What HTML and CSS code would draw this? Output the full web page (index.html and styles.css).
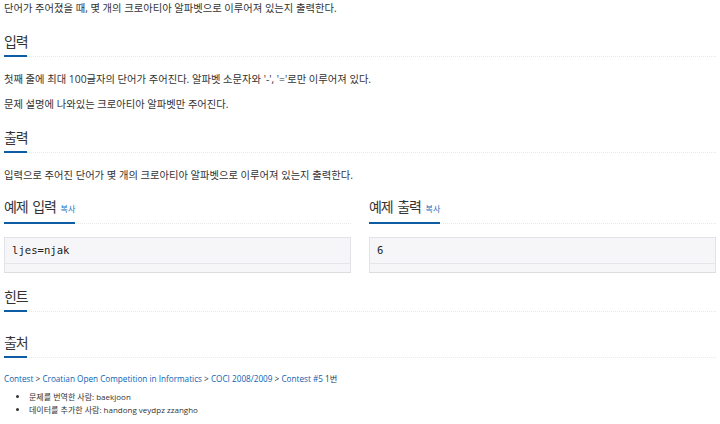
FILE: index.html
```html
<!DOCTYPE html>
<html>
<head>
<meta charset="utf-8">
<link rel="stylesheet" href="styles.css">
</head>
<body>
<div class="page">
  <p class="para lead">단어가 주어졌을 때, 몇 개의 크로아티아 알파벳으로 이루어져 있는지 출력한다.</p>

  <section class="sec">
    <div class="headline"><h2>입력</h2></div>
    <p class="para">첫째 줄에 최대 100글자의 단어가 주어진다. 알파벳 소문자와 '-', '='로만 이루어져 있다.</p>
    <p class="para">문제 설명에 나와있는 크로아티아 알파벳만 주어진다.</p>
  </section>

  <section class="sec">
    <div class="headline"><h2>출력</h2></div>
    <p class="para">입력으로 주어진 단어가 몇 개의 크로아티아 알파벳으로 이루어져 있는지 출력한다.</p>
  </section>

  <div class="samples">
    <div class="sample">
      <div class="headline"><h2>예제 입력 <a class="copy">복사</a></h2></div>
      <div class="box"><pre class="code">ljes=njak</pre></div>
    </div>
    <div class="sample">
      <div class="headline"><h2>예제 출력 <a class="copy">복사</a></h2></div>
      <div class="box"><pre class="code">6</pre></div>
    </div>
  </div>

  <section class="sec">
    <div class="headline empty"><h2>힌트</h2></div>
  </section>

  <section class="sec">
    <div class="headline"><h2>출처</h2></div>
    <p class="src"><a>Contest</a> &gt; <a>Croatian Open Competition in Informatics</a> &gt; <a>COCI 2008/2009</a> &gt; <a>Contest #5</a> 1번</p>
    <ul class="credits">
      <li>문제를 번역한 사람: baekjoon</li>
      <li>데이터를 추가한 사람: handong veydpz zzangho</li>
    </ul>
  </section>
</div>
</body>
</html>
```

FILE: styles.css
```css
html, body {
  margin: 0;
  padding: 0;
  background: #fff;
}
body {
  font-family: "Open Sans", "Noto Sans CJK KR", sans-serif;
  font-size: 10.3px;
  color: #333;
}
.page {
  padding: 0 4px;
  width: 712px;
}
.para {
  margin: 0;
  padding-bottom: 2px;
  line-height: 15px;
}
.para.lead {
  padding-top: 1px;
}
.para + .para {
  padding-top: 8px;
}
.headline {
  border-bottom: 1px dotted #e8e8e8;
  margin: 14px 0 15px;
}
.headline.empty {
  margin-bottom: 21px;
}
.headline h2 {
  display: inline-block;
  margin: 0 0 -1px;
  font-size: 14px;
  letter-spacing: -1.2px;
  word-spacing: 2.5px;
  font-weight: 400;
  line-height: 20px;
  padding-bottom: 3px;
  border-bottom: 2px solid #0e5ca4;
  color: #333;
}
.copy {
  font-size: 8px;
  letter-spacing: 0;
  word-spacing: 0;
  color: #1a6fc0;
  margin-left: 0;
}
a {
  color: #0d63b3;
  text-decoration: none;
}
.samples {
  display: grid;
  grid-template-columns: 347px 347px;
  column-gap: 18px;
}
.samples .headline {
  margin-top: 12px;
  margin-bottom: 13px;
}
.box {
  background: #f6f6f8;
  border: 1px solid #e3e3e7;
  border-bottom-color: #dcdce0;
  padding-bottom: 8px;
}
.code {
  margin: 0;
  font-family: "DejaVu Sans Mono", monospace;
  font-size: 10.6px;
  color: #222;
  padding: 5px 7px 6px;
  line-height: 14px;
  border-bottom: 1px solid #e6e6ea;
}
.src {
  margin: 0;
  font-size: 8.2px;
  line-height: 12px;
}
.credits {
  margin: 5px 0 0;
  padding-left: 25px;
  line-height: 13px;
  font-size: 8px;
}
```
